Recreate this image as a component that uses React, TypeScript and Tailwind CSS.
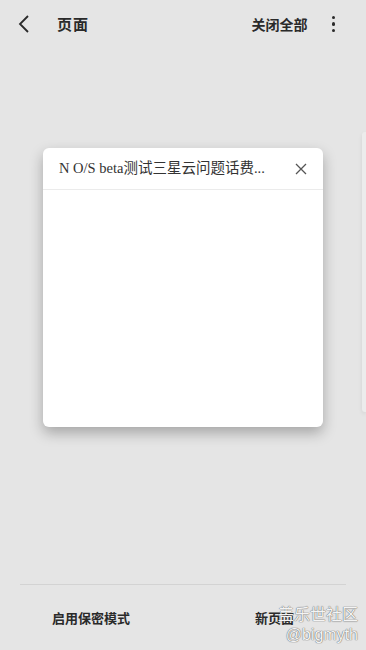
const cjk = "font-['Noto_Sans_CJK_SC',sans-serif]";

export default function App() {
  return (
    <div className={`relative w-[366px] h-[650px] bg-[#e5e5e5] flex flex-col overflow-hidden ${cjk}`}>
      <header className="h-[48px] flex items-center pl-[17px] pr-[31px]">
        <svg width="14" height="18" viewBox="0 0 14 18" className="mr-[26px]">
          <path d="M11 1 L3 9 L11 17" fill="none" stroke="#2a2a2a" strokeWidth="1.8" />
        </svg>
        <span className="text-[15px] font-bold text-[#2a2a2a] tracking-[1px]">页面</span>
        <span className="ml-auto text-[14px] font-bold text-[#2a2a2a]">关闭全部</span>
        <div className="ml-[24px] flex flex-col gap-[3px]">
          <span className="w-[3.5px] h-[3.5px] rounded-full bg-[#2a2a2a]" />
          <span className="w-[3.5px] h-[3.5px] rounded-full bg-[#2a2a2a]" />
          <span className="w-[3.5px] h-[3.5px] rounded-full bg-[#2a2a2a]" />
        </div>
      </header>

      <div className="flex-1 flex justify-center pt-[100px]">
        <div className="w-[280px] h-[279px] bg-white rounded-[6px] shadow-[0_6px_14px_rgba(0,0,0,0.28)] flex flex-col">
          <div className="h-[42px] flex items-center pl-[16px] pr-[16px] border-b border-[#ebebeb]">
            <span className="text-[14.5px] text-[#333] font-['Liberation_Serif','Noto_Sans_CJK_SC',serif] whitespace-nowrap">
              N O/S beta测试三星云问题话费...
            </span>
            <svg width="12" height="12" viewBox="0 0 12 12" className="ml-auto">
              <path d="M1 1 L11 11 M11 1 L1 11" stroke="#555" strokeWidth="1.3" />
            </svg>
          </div>
        </div>
      </div>

      <div className="absolute right-0 top-[132px] w-[4px] h-[280px] bg-[#ececec] rounded-l-[3px] shadow-[0_2px_4px_rgba(0,0,0,0.08)]" />

      <footer className="mx-[20px] border-t border-[#d3d3d3] h-[66px] flex items-center">
        <span className="ml-[32px] text-[13px] font-bold text-[#2a2a2a]">启用保密模式</span>
        <span className="ml-auto mr-[52px] text-[13px] font-bold text-[#2a2a2a]">新页面</span>
      </footer>

      <div className="absolute right-[8px] bottom-[7px] flex flex-col items-end leading-none text-[#f4f4f4] [text-shadow:0_0_1px_#666,0_0_1px_#666]">
        <span className="text-[16px] mb-[6px]">盖乐世社区</span>
        <span className="text-[16px] font-['Liberation_Sans',sans-serif]">@bigmyth</span>
      </div>
    </div>
  );
}
